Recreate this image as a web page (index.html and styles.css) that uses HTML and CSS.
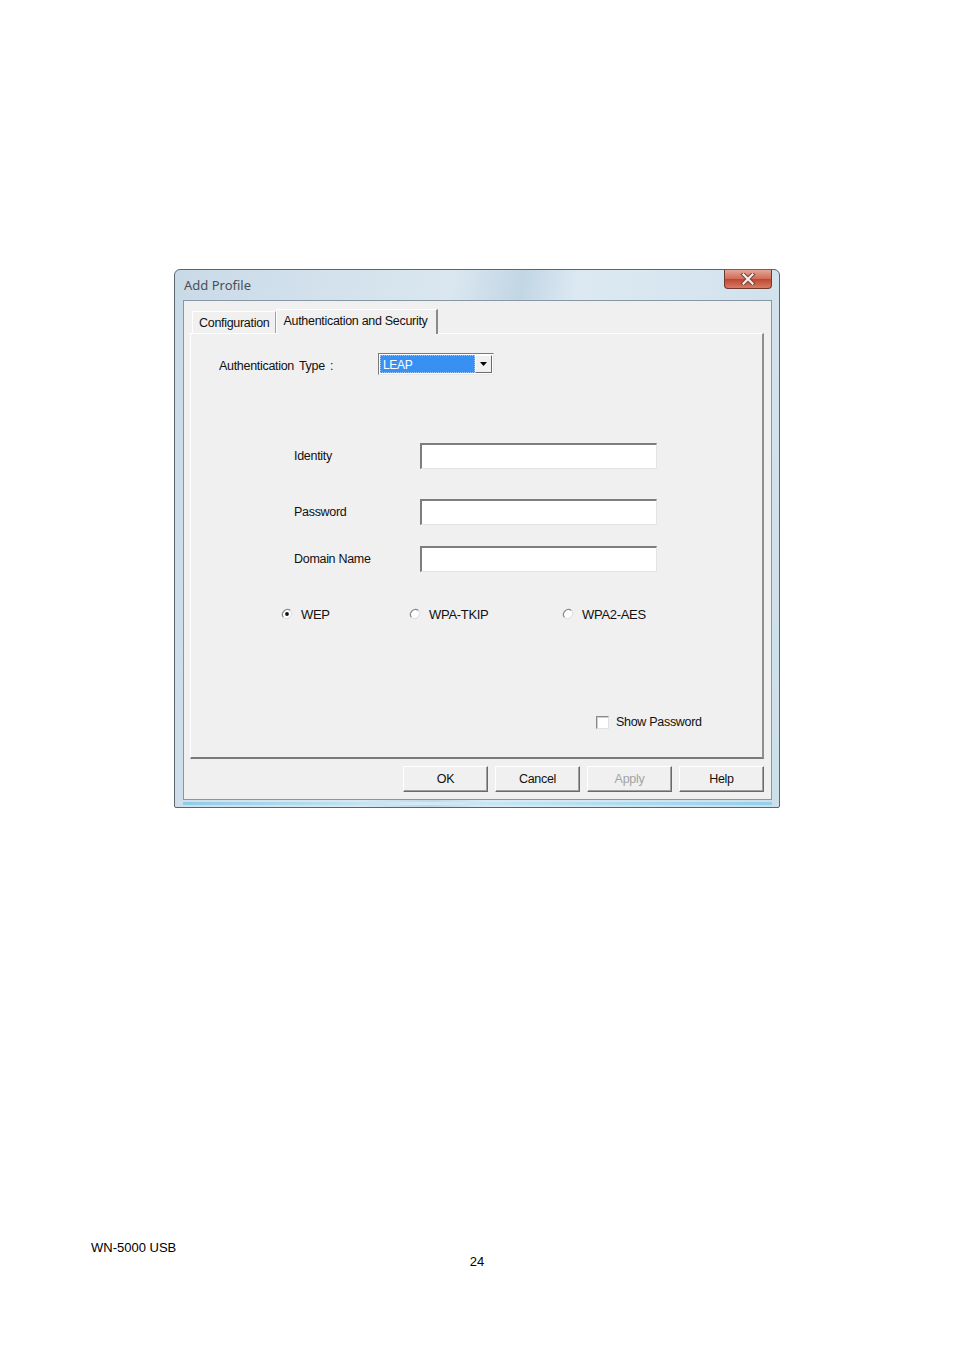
FILE: index.html
```html
<!DOCTYPE html>
<html lang="en">
<head>
  <meta charset="UTF-8" />
  <title>Add Profile</title>
  <link rel="stylesheet" href="styles.css">
</head>
<body>
  <div class="page">
    <div class="window">
      <div class="titlebar">
        <span class="title">Add Profile</span>
        <div class="close-btn">
          <svg width="20" height="12" viewBox="0 0 20 12">
            <path d="M5.5 1.5 L14.5 10.5 M14.5 1.5 L5.5 10.5" stroke="#7a4038" stroke-width="4.2" stroke-linecap="square"/>
            <path d="M5.5 1.5 L14.5 10.5 M14.5 1.5 L5.5 10.5" stroke="#f4eeec" stroke-width="2.2" stroke-linecap="square"/>
          </svg>
        </div>
      </div>
      <div class="client">
        <div class="tabs">
          <div class="tab">Configuration</div>
          <div class="tab active">Authentication and Security</div>
        </div>
        <div class="panel">
          <div class="auth-row">
            <label class="auth-label">Authentication Type :</label>
            <div class="combo">
              <span class="combo-value">LEAP</span>
              <span class="combo-btn">
                <svg width="7" height="4" viewBox="0 0 7 4"><path d="M0 0 H7 L3.5 4 Z" fill="#000"/></svg>
              </span>
            </div>
          </div>

          <!-- credential fields -->
          <div class="field first">
            <label>Identity</label>
            <div class="textbox"></div>
          </div>
          <div class="field second">
            <label>Password</label>
            <div class="textbox"></div>
          </div>
          <div class="field third">
            <label>Domain Name</label>
            <div class="textbox"></div>
          </div>

          <div class="radios">
            <div class="radio r-wep">
              <svg width="12" height="12" viewBox="0 0 12 12">
                <circle cx="6" cy="6" r="5" fill="#fff"/>
                <path d="M2.5 9.5 A5 5 0 0 1 9.5 2.5" fill="none" stroke="#8a8a8a" stroke-width="1.2"/>
                <path d="M9.5 2.5 A5 5 0 0 1 2.5 9.5" fill="none" stroke="#e2e2e2" stroke-width="1.2"/>
                <circle cx="6" cy="6" r="1.9" fill="#111"/>
              </svg>
              <span>WEP</span>
            </div>
            <div class="radio r-tkip">
              <svg width="12" height="12" viewBox="0 0 12 12">
                <circle cx="6" cy="6" r="5" fill="#fff"/>
                <path d="M2.5 9.5 A5 5 0 0 1 9.5 2.5" fill="none" stroke="#8a8a8a" stroke-width="1.2"/>
                <path d="M9.5 2.5 A5 5 0 0 1 2.5 9.5" fill="none" stroke="#e2e2e2" stroke-width="1.2"/>
              </svg>
              <span>WPA-TKIP</span>
            </div>
            <div class="radio r-aes">
              <svg width="12" height="12" viewBox="0 0 12 12">
                <circle cx="6" cy="6" r="5" fill="#fff"/>
                <path d="M2.5 9.5 A5 5 0 0 1 9.5 2.5" fill="none" stroke="#8a8a8a" stroke-width="1.2"/>
                <path d="M9.5 2.5 A5 5 0 0 1 2.5 9.5" fill="none" stroke="#e2e2e2" stroke-width="1.2"/>
              </svg>
              <span>WPA2-AES</span>
            </div>
          </div>

          <div class="show-pw">
            <span class="checkbox"></span>
            <span>Show Password</span>
          </div>
        </div>
        <div class="buttons">
          <button class="btn">OK</button>
          <button class="btn">Cancel</button>
          <button class="btn disabled">Apply</button>
          <button class="btn">Help</button>
        </div>
      </div>
    </div>

    <div class="footer">
      <div class="model">WN-5000 USB</div>
      <div class="page-num">24</div>
    </div>
  </div>
</body>
</html>
```

FILE: styles.css
```css
body {
  margin: 0;
  padding: 0;
  background: #fff;
  font-family: "Liberation Sans", Arial, sans-serif;
}
.page {
  width: 954px;
  height: 1350px;
  padding-top: 269px;
  box-sizing: border-box;
}
.window {
  margin-left: 174px;
  width: 606px;
  height: 539px;
  box-sizing: border-box;
  border: 1px solid #5a6670;
  border-radius: 6px 6px 2px 2px;
  background: linear-gradient(100deg, #c9dae7 0%, #dae7f0 40%, #c2d6e4 50%, #dce9f2 58%, #cddfeb 100%);
  padding: 0 7px 6px 8px;
  position: relative;
}
.window::after {
  content: "";
  display: block;
  height: 3px;
  margin-top: 2px;
  background: linear-gradient(90deg, #8fcbe6, #d2ecf7 40%, #93d0ea);
}
.titlebar {
  height: 30px;
  display: flex;
  align-items: center;
}
.title {
  font-family: "Noto Sans", "Open Sans", sans-serif;
  font-size: 13px;
  color: #4a4f55;
  margin-left: 1px;
  margin-top: -1px;
}
.close-btn {
  position: absolute;
  top: 0;
  right: 7px;
  width: 46px;
  height: 18px;
  border: 1px solid #6b3a33;
  border-top: none;
  border-radius: 0 0 4px 4px;
  background: linear-gradient(#e3a696, #d06a56 50%, #bf4630 51%, #d87a64);
  display: flex;
  align-items: center;
  justify-content: center;
}
.client {
  height: 500px;
  background: #f0f0f0;
  border: 1px solid #8696a4;
  box-sizing: border-box;
  font-size: 12.5px;
  color: #111;
  letter-spacing: -0.3px;
}
.tabs {
  display: flex;
  align-items: flex-end;
  height: 32px;
  padding-left: 8px;
}
.tab {
  height: 22px;
  line-height: 22px;
  padding: 0 6px;
  border: 1px solid #fff;
  border-right: 1px solid #a0a0a0;
  border-bottom: none;
  box-sizing: border-box;
}
.tab.active {
  height: 25px;
  line-height: 22px;
  padding: 0 8px 0 6px;
  border-right: 2px solid #8a8a8a;
  margin-bottom: -1px;
  position: relative;
  background: #f0f0f0;
}
.panel {
  margin-left: 6px;
  width: 574px;
  height: 426px;
  box-sizing: border-box;
  border-top: 1px solid #fff;
  border-left: 1px solid #fff;
  border-right: 2px solid #8f8f8f;
  border-bottom: 2px solid #7a7a7a;
  padding-top: 19px;
}
.auth-row {
  display: flex;
  align-items: center;
  height: 22px;
}
.auth-label {
  width: 159px;
  margin-left: 28px;
  margin-top: 4px;
  word-spacing: 2px;
}
.combo {
  width: 116px;
  height: 22px;
  box-sizing: border-box;
  border: 1px solid;
  border-color: #7a7a7a #e8e8e8 #e8e8e8 #7a7a7a;
  background: #fff;
  display: flex;
  padding: 1px;
  flex-shrink: 0;
}
.combo-value {
  flex: 1;
  background: #3891f2;
  color: #fff;
  font-size: 12px;
  line-height: 18px;
  padding-left: 2px;
  border: 1px dotted #9bc6f8;
}
.combo-btn {
  width: 17px;
  box-sizing: border-box;
  border: 1px solid;
  border-color: #fff #6a6a6a #6a6a6a #fff;
  background: #f0f0f0;
  display: flex;
  align-items: center;
  justify-content: center;
}
.field {
  display: flex;
  align-items: center;
}
.field label {
  width: 126px;
  margin-left: 103px;
}
.field.first { margin-top: 68px; }
.field.second { margin-top: 30px; }
.field.third { margin-top: 21px; }
.textbox {
  width: 237px;
  height: 26px;
  box-sizing: border-box;
  background: #fff;
  border-top: 2px solid #7d7d7d;
  border-left: 2px solid #7d7d7d;
  border-right: 1px solid #e4e4e4;
  border-bottom: 1px solid #e4e4e4;
}
.radios {
  display: flex;
  margin-top: 34px;
  height: 16px;
  align-items: center;
}
.radio {
  display: flex;
  align-items: center;
  gap: 8px;
  font-size: 13px;
}
.r-wep { margin-left: 90px; width: 128px; }
.r-tkip { width: 153px; }
.show-pw {
  display: flex;
  align-items: center;
  gap: 7px;
  margin-top: 93px;
  margin-left: 405px;
}
.checkbox {
  width: 13px;
  height: 13px;
  box-sizing: border-box;
  background: #fff;
  border: 1px solid;
  border-color: #8a8a8a #e0e0e0 #e0e0e0 #8a8a8a;
  box-shadow: inset 1px 1px 0 #cfcfcf;
}
.buttons {
  display: flex;
  justify-content: flex-end;
  gap: 7px;
  padding-right: 7px;
  margin-top: 7px;
}
.btn {
  width: 85px;
  height: 26px;
  box-sizing: border-box;
  font-family: "Liberation Sans", Arial, sans-serif;
  font-size: 12.5px;
  letter-spacing: -0.3px;
  color: #111;
  background: #f0f0f0;
  border: 1px solid;
  border-color: #fff #6a6a6a #6a6a6a #fff;
  box-shadow: inset -1px -1px 0 #a0a0a0;
  padding: 0;
}
.btn.disabled {
  color: #a3a3a3;
}
.footer {
  margin-top: 432px;
  font-family: "Liberation Sans", Arial, sans-serif;
  font-size: 13px;
  color: #000;
}
.model {
  margin-left: 91px;
}
.page-num {
  text-align: center;
  margin-top: -1px;
}
```
